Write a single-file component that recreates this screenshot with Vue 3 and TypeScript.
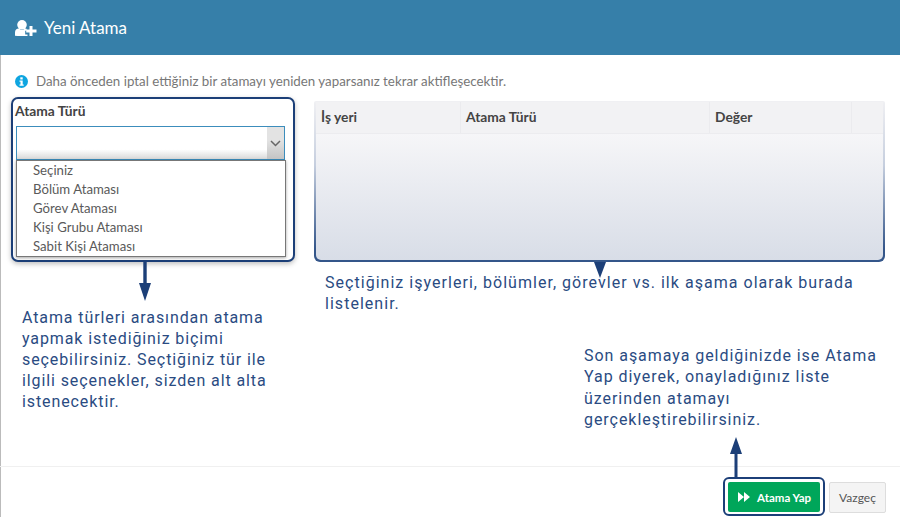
<script setup lang="ts">
const options: string[] = ['Seçiniz', 'Bölüm Ataması', 'Görev Ataması', 'Kişi Grubu Ataması', 'Sabit Kişi Ataması']
const columns: string[] = ['İş yeri', 'Atama Türü', 'Değer', '']
</script>

<template>
  <div class="page">
    <header class="head">
      <svg class="uicon" width="22" height="16" viewBox="0 0 22 16"><circle cx="7" cy="4.800" r="4.800" fill="#fff"/><path d="M0 15.800v-3.300c0-2.600 1.500-4 4-4 .8.800 1.800 1.200 3 1.200s2.200-.4 3-1.200c.6 0 1.200.1 1.700.4v1.900h-1.500v3.700h2.300v2.300z" fill="#fff"/><path d="M14.500 6h3v3.500h4v3h-4V16h-3v-3.500h-3.300v-3h3.300z" fill="#fff"/></svg>
      <h1>Yeni Atama</h1>
    </header>
    <main class="body">
      <p class="notice">
        <svg width="13" height="13" viewBox="0 0 13 13"><circle cx="6.500" cy="6.500" r="6.500" fill="#0ea5e0"/><rect x="5.300" y="2.300" width="2.400" height="2.200" fill="#fff"/><path d="M4.500 5.500h3.200v3.900h1v1.300H4.500V9.400h1V6.800h-1z" fill="#fff"/></svg>
        Daha önceden iptal ettiğiniz bir atamayı yeniden yaparsanız tekrar aktifleşecektir.
      </p>
      <div class="cols">
        <section class="left">
          <div class="box">
            <label>Atama Türü</label>
            <div class="select">
              <span class="caret">
                <svg width="11" height="7" viewBox="0 0 11 7"><path d="M1 1l4.500 4.500L10 1" fill="none" stroke="#666" stroke-width="1.500"/></svg>
              </span>
            </div>
            <ul class="list">
              <li v-for="o in options" :key="o">{{ o }}</li>
            </ul>
          </div>
          <svg class="arrow-down" width="12" height="39" viewBox="0 0 12 39"><path d="M4.300 0h3.400v21h4.300l-6 18-6-18h4.300z" fill="#1c3f78"/></svg>
          <p class="note note-left">Atama türleri arasından atama yapmak istediğiniz biçimi seçebilirsiniz. Seçtiğiniz tür ile ilgili seçenekler, sizden alt alta istenecektir.</p>
        </section>
        <section class="right">
          <div class="table-frame">
            <div class="table">
              <div class="thead">
                <div v-for="(c, i) in columns" :key="i" class="th">{{ c }}</div>
              </div>
            </div>
          </div>
          <svg class="pointer" width="12" height="16" viewBox="0 0 12 16"><path d="M0 0h12l-6 16z" fill="#1c3f78"/></svg>
          <p class="note note-right">Seçtiğiniz işyerleri, bölümler, görevler vs. ilk aşama olarak burada listelenir.</p>
          <p class="note note-final">Son aşamaya geldiğinizde ise Atama Yap diyerek, onayladığınız liste üzerinden atamayı gerçekleştirebilirsiniz.</p>
        </section>
      </div>
    </main>
    <footer class="foot">
      <svg class="arrow-up" width="12" height="40" viewBox="0 0 12 40"><path d="M6 0l6 17H7.500v23h-3V17H0z" fill="#1c3f78"/></svg>
      <div class="ring">
        <button class="primary" type="button">
          <svg width="12" height="10" viewBox="0 0 12 10"><path d="M0 0l6 5-6 5zM6 0l6 5-6 5z" fill="#fff"/></svg>
          Atama Yap
        </button>
      </div>
      <button class="cancel" type="button">Vazgeç</button>
    </footer>
  </div>
</template>

<style>
html, body { margin: 0; background: #fff; }
</style>

<style scoped>
.page {
  width: 900px;
  height: 517px;
  display: flex;
  flex-direction: column;
  overflow: hidden;
  font-family: "Lato", sans-serif;
  color: #333;
  background: #fff;
  box-shadow: inset 1px 0 0 #bbb;
}
.head {
  height: 55px;
  flex: none;
  background: #367fa9;
  display: flex;
  align-items: center;
  gap: 7px;
  padding-left: 15px;
  color: #fff;
}
.uicon { margin-top: 1px; }
h1 {
  margin: 0;
  font-size: 17px;
  font-weight: 400;
}
.body {
  flex: 1;
  min-height: 0;
  padding: 0 15px 0 11px;
}
.notice {
  margin: 19px 0 0 4px;
  height: 15px;
  display: flex;
  align-items: center;
  gap: 8px;
  font-size: 13.330px;
  line-height: 15px;
  color: #777;
}
.cols {
  display: grid;
  grid-template-columns: 284px 571px;
  column-gap: 19px;
  margin-top: 8px;
}
.left { display: flex; flex-direction: column; position: relative; }
.box {
  box-sizing: border-box;
  width: 284px;
  height: 165px;
  border: 2px solid #1c3f78;
  border-radius: 7px;
  padding: 3px 3px 0 2px;
  box-shadow: 0 2px 5px rgba(0,0,0,.25);
  background: #fff;
}
label {
  display: block;
  font-size: 13.800px;
  font-weight: 700;
  line-height: 18px;
  color: #444;
}
.select {
  box-sizing: border-box;
  margin-top: 6px;
  margin-left: 1px;
  width: 269px;
  height: 34px;
  border: 1px solid #3c8dbc;
  display: flex;
  justify-content: flex-end;
  background: linear-gradient(#fff 70%, #d9d9d9);
}
.caret {
  width: 17px;
  background: linear-gradient(#e3e3e3 40%, #c4c4c4);
  display: flex;
  align-items: center;
  justify-content: center;
}
.list {
  box-sizing: border-box;
  list-style: none;
  margin: 0 0 0 1px;
  padding: 0 0 0 16px;
  width: 270px;
  height: 97px;
  border: 1px solid #777;
  box-shadow: 0 1px 3px rgba(0,0,0,.35);
  background: #fff;
}
li {
  font-size: 13.200px;
  line-height: 19px;
  color: #5a5a5a;
}
.arrow-down { margin: 0 0 0 128px; display: block; }
.note {
  margin: 0;
  font-family: "Roboto", sans-serif;
  color: #2a4b82;
  font-size: 16px;
  line-height: 21px;
  letter-spacing: 1.03px;
}
.note-left { margin: 6px 0 0 11px; width: 258px; letter-spacing: 0.9px; }
.right { position: relative; padding-top: 4px; }
.table-frame {
  width: 571px;
  height: 161px;
  box-sizing: border-box;
  padding: 1px 2px 2px 2px;
  border-radius: 2px 2px 6px 6px;
  background: linear-gradient(#f0f0f3, #c5cede 40%, #34568a 92%);
}
.table {
  height: 100%;
  border-radius: 0 0 5px 5px;
  background: linear-gradient(#f6f6f8 20%, #d8dde7);
}
.thead {
  height: 31px;
  display: grid;
  grid-template-columns: 145px 249px 142px 1fr;
  background: #f2f2f4;
  border-bottom: 1px solid #ececef;
}
.th {
  padding-left: 5px;
  font-size: 13.800px;
  font-weight: 700;
  line-height: 29px;
  color: #444;
  border-right: 1px solid #ebebee;
}
.th:last-child { border-right: 0; }
.pointer { position: absolute; left: 280px; top: 165px; }
.note-right { margin: 10px 0 0 11px; width: 545px; }
.note-final { margin: 31px 0 0 270px; width: 300px; line-height: 21.300px; letter-spacing: 0.95px; }
.foot {
  position: relative;
  flex: none;
  height: 51px;
  box-sizing: border-box;
  border-top: 1px solid #f0f0f0;
  display: flex;
  justify-content: flex-end;
  align-items: flex-start;
  gap: 4px;
  padding: 10px 14px 0 0;
}
.arrow-up { position: absolute; left: 730px; top: -30px; }
.ring {
  border: 2px solid #1c3f78;
  border-radius: 6px;
  padding: 3px 3px 2px;
}
.primary {
  width: 92px;
  height: 30px;
  display: flex;
  align-items: center;
  gap: 7px;
  padding: 0 0 0 10px;
  border: 0;
  border-radius: 2px;
  background: #00a65a;
  color: #fff;
  font: 700 11.500px "Lato", sans-serif;
}
.cancel {
  width: 57px;
  height: 31px;
  margin-top: 5px;
  border: 1px solid #ddd;
  border-radius: 2px;
  background: #f4f4f4;
  color: #555;
  font: 400 12px "Lato", sans-serif;
}
</style>
